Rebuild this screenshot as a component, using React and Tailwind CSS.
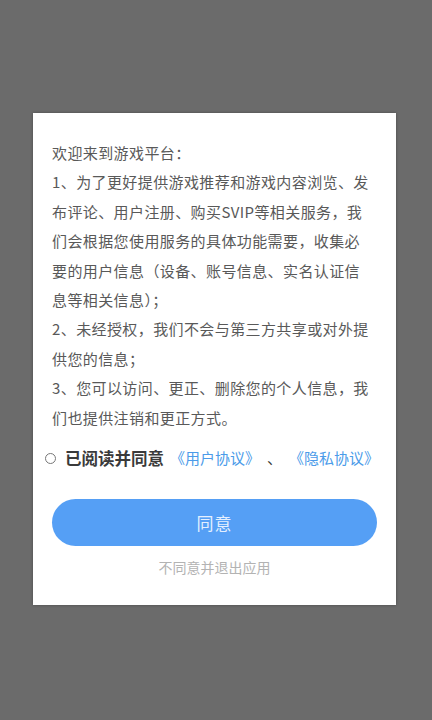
import React, { useState } from 'react';

const lines = [
  '欢迎来到游戏平台：',
  '1、为了更好提供游戏推荐和游戏内容浏览、发',
  '布评论、用户注册、购买SVIP等相关服务，我',
  '们会根据您使用服务的具体功能需要，收集必',
  '要的用户信息（设备、账号信息、实名认证信',
  '息等相关信息）；',
  '2、未经授权，我们不会与第三方共享或对外提',
  '供您的信息；',
  '3、您可以访问、更正、删除您的个人信息，我',
  '们也提供注销和更正方式。',
];

const App = () => {
  const [checked, setChecked] = useState(false);

  return (
    <div
      className="w-[432px] h-[720px] bg-[#6b6b6b] pt-[113px] pl-[33px]"
      style={{ fontFamily: '"Noto Sans CJK SC", "Noto Sans", sans-serif' }}
    >
      <div className="w-[363px] bg-white shadow-[0_0_3px_rgba(0,0,0,0.3)] pt-[25px] pb-[28px]">
        {/* Terms */}
        <div className="pl-[19px] text-[15px] leading-[29.4px] tracking-[0.4px] text-[#595959]">
          {lines.map(l => (
            <div key={l} className="whitespace-nowrap">{l}</div>
          ))}
        </div>

        {/* Consent */}
        <div className="mt-[16px] pl-[12px] h-[20px] flex items-center whitespace-nowrap">
          <button
            onClick={() => setChecked(!checked)}
            className={`w-[11px] h-[11px] rounded-full border border-[#777] mr-[9px] ${checked ? 'bg-[#559ff5]' : ''}`}
          />
          <span className="text-[16.5px] font-bold text-[#3a3a3a]">已阅读并同意</span>
          <span className="ml-[6px] text-[15px] text-[#4b9be9]">《用户协议》</span>
          <span className="mx-[7px] text-[15px] text-[#3a3a3a]">、</span>
          <span className="text-[15px] text-[#4b9be9]">《隐私协议》</span>
        </div>

        {/* Actions */}
        <div className="mt-[31px] px-[19px]">
          <button className="w-full h-[47px] rounded-full bg-[#559ff5] text-[#e3efff] text-[17px] tracking-[1px]">
            同意
          </button>
          <p className="mt-[11px] text-center text-[14px] leading-[20px] text-[#b3b3b3]">
            不同意并退出应用
          </p>
        </div>
      </div>
    </div>
  );
};

export default App;
